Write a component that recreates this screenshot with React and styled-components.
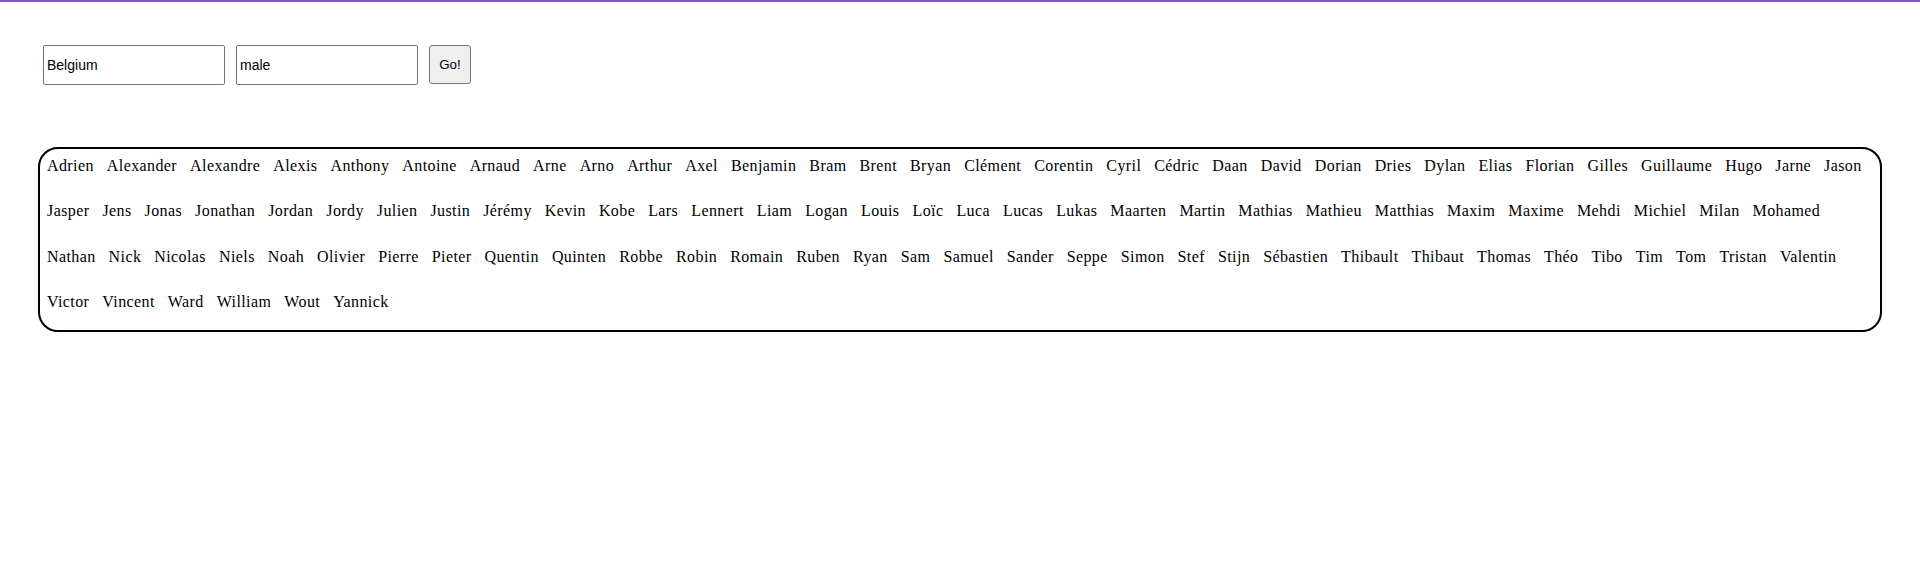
import React from "react";
import styled, { createGlobalStyle } from "styled-components";

const Global = createGlobalStyle`
  html, body { margin: 0; padding: 0; background: #fff; }
  body { font-family: "Liberation Serif", "Times New Roman", serif; }
`;

const TopBar = styled.div`
  height: 2px;
  background: #7e57c2;
`;

const Page = styled.main`
  padding: 0 38px;
`;

const Form = styled.form`
  display: flex;
  align-items: flex-start;
  gap: 11px;
  margin-top: 43px;
  padding-left: 5px;
`;

const Field = styled.input`
  box-sizing: border-box;
  width: 182px;
  height: 40px;
  border: 1px solid #767676;
  border-radius: 2px;
  padding: 0 3px;
  font-family: "Liberation Sans", Arial, sans-serif;
  font-size: 14px;
  color: #000;
  background: #fff;
  outline: none;
`;

const Button = styled.button`
  box-sizing: border-box;
  width: 42px;
  height: 39px;
  border: 1px solid #767676;
  border-radius: 3px;
  background: #efefef;
  font-family: "Liberation Sans", Arial, sans-serif;
  font-size: 13.33px;
  color: #000;
  padding: 0;
`;

const NameBox = styled.div`
  margin-top: 62px;
  border: 2px solid #000;
  border-radius: 20px;
  padding: 8px 7px 19px;
  display: flex;
  flex-wrap: wrap;
  column-gap: 13px;
  row-gap: 27.3px;
`;

const Name = styled.span`
  font-family: "Liberation Serif", "Times New Roman", serif;
  font-size: 16px;
  letter-spacing: 0.4px;
  line-height: 18px;
  color: #000;
`;

const names = `Adrien Alexander Alexandre Alexis Anthony Antoine Arnaud Arne Arno Arthur Axel Benjamin Bram Brent Bryan Clément Corentin Cyril Cédric Daan David Dorian Dries Dylan Elias Florian Gilles Guillaume Hugo Jarne Jason Jasper Jens Jonas Jonathan Jordan Jordy Julien Justin Jérémy Kevin Kobe Lars Lennert Liam Logan Louis Loïc Luca Lucas Lukas Maarten Martin Mathias Mathieu Matthias Maxim Maxime Mehdi Michiel Milan Mohamed Nathan Nick Nicolas Niels Noah Olivier Pierre Pieter Quentin Quinten Robbe Robin Romain Ruben Ryan Sam Samuel Sander Seppe Simon Stef Stijn Sébastien Thibault Thibaut Thomas Théo Tibo Tim Tom Tristan Valentin Victor Vincent Ward William Wout Yannick`.split(" ");

export default function App() {
  return (
    <>
      <Global />
      <TopBar />
      <Page>
        <Form onSubmit={(e) => e.preventDefault()}>
          <Field defaultValue="Belgium" />
          <Field defaultValue="male" />
          <Button type="submit">Go!</Button>
        </Form>
        <NameBox>
          {names.map((n) => (
            <Name key={n}>{n}</Name>
          ))}
        </NameBox>
      </Page>
    </>
  );
}
